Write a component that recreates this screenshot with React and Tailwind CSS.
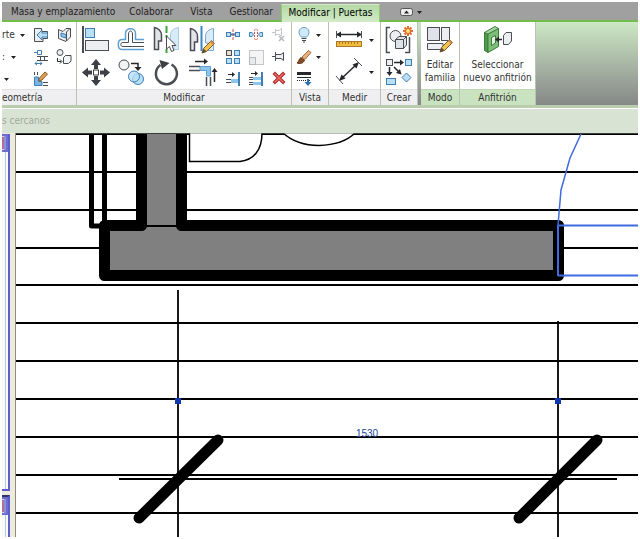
import React from "react";

const INK = "#4a4d52";
const BLUE = "#3f7fb5";
const SKY = "#b9dff5";

function Icon({ size, children }) {
  return (
    <svg width={size} height={size} viewBox={`0 0 ${size} ${size}`} fill="none" aria-hidden="true" className="shrink-0">
      {children}
    </svg>
  );
}

function Pencil({ transform }) {
  return (
    <g transform={transform}>
      <path d="M0 13 L1.5 8.5 L9.5 0.5 L12.5 3.5 L4.5 11.5 Z" fill="#f2c14e" stroke="#7a5a28" />
      <path d="M0 13 L1.5 8.5 L4.5 11.5 Z" fill="#5b4a38" />
      <path d="M9.5 0.5 L12.5 3.5 L11 5 L8 2 Z" fill="#c9885a" />
    </g>
  );
}

const icons = {
  align: (
    <Icon size={30}>
      <path d="M3 1 V28" stroke={INK} strokeWidth="2" />
      <rect x="5.5" y="3.5" width="9" height="9" fill={SKY} stroke={BLUE} />
      <rect x="5.5" y="15.5" width="23" height="10" fill="#eceef1" stroke={INK} />
    </Icon>
  ),
  offset: (
    <Icon size={30}>
      <path d="M28 24.5 H6 C1 24.5 1 14.5 6 14.5 H9.5 V8.5 C9.5 2 19.5 2 19.5 8.5 V14.5 H28" stroke="#5f9fd2" strokeWidth="1.5" />
      <path d="M28 21.5 H7 C4 21.5 4 17.5 7 17.5 H12.5 V9 C12.5 5 16.5 5 16.5 9 V17.5 H28" stroke={INK} />
    </Icon>
  ),
  mirrorPick: (
    <Icon size={30}>
      <path d="M2.5 2.5 C6 3 9.5 6 9.5 10 V16 H6.5 V24.5 H2.5 Z" fill="#e2e4e8" stroke={INK} strokeWidth="1.5" />
      <path d="M26.5 2.5 C22 3 18.5 6 18.5 10 V17 H22 V24.5 H26.5 Z" fill="#d8ecf8" stroke="#a8cbe2" />
      <path d="M14.5 1 V8 M14.5 10 V13 M14.5 24 V28" stroke="#3da639" strokeWidth="2" />
      <path d="M14.5 11 V24 L17.5 21.5 L19.5 26.5 L22 25.5 L20 20.5 H24 Z" fill="#fff" stroke={INK} />
    </Icon>
  ),
  mirrorDraw: (
    <Icon size={30}>
      <path d="M2.5 3.5 C6 4 9.5 7 9.5 11 V17 H6.5 V25.5 H2.5 Z" fill="#e2e4e8" stroke={INK} strokeWidth="1.5" />
      <path d="M25.5 3.5 C21 4 17.5 7 17.5 11 V18 H20 V25.5 H25.5 Z" fill="#d8ecf8" stroke="#7eacd0" />
      <path d="M13.5 1 V26" stroke="#3f86c4" strokeWidth="2" />
      <Pencil transform="translate(14 15)" />
    </Icon>
  ),
  move: (
    <Icon size={30}>
      <g fill="#3c3f43">
        <path d="M16 1 L21 7 H18 V11 H14 V7 H11 Z" />
        <path d="M16 28 L21 22 H18 V18 H14 V22 H11 Z" />
        <path d="M2 14.5 L8 9.5 V12.5 H12 V16.5 H8 V19.5 Z" />
        <path d="M30 14.5 L24 9.5 V12.5 H20 V16.5 H24 V19.5 Z" />
      </g>
      <rect x="13.5" y="12" width="5" height="5" fill="#fff" stroke="#3c3f43" />
    </Icon>
  ),
  copy: (
    <Icon size={30}>
      <circle cx="8" cy="7" r="5" fill="#f3f4f6" stroke={INK} />
      <path d="M15 5.5 H22 V10" stroke="#26282b" strokeWidth="1.5" />
      <path d="M18.5 9 H25.5 L22 13 Z" fill="#26282b" />
      <circle cx="22" cy="21" r="5.5" fill={SKY} stroke={BLUE} />
      <circle cx="18" cy="18.5" r="5.5" fill={SKY} fillOpacity="0.8" stroke={BLUE} />
    </Icon>
  ),
  rotate: (
    <Icon size={30}>
      <path d="M19.5 6.5 A10.5 10.5 0 1 1 8.5 7" stroke={INK} strokeWidth="2.5" />
      <path d="M7.5 2 L17.5 5 L10 11 Z" fill="#3c3f43" />
    </Icon>
  ),
  trim: (
    <Icon size={30}>
      <path d="M7 3.5 H18" stroke="#26282b" strokeWidth="1.5" />
      <path d="M16 0.5 L20 3.5 L16 6.5 Z" fill="#26282b" />
      <path d="M1 8.5 H12 M1 12.5 H12" stroke={INK} strokeWidth="1.5" />
      <path d="M12 8.5 H22.5 V18 H18.5 V12.5 H12 Z" fill="#8cc6ec" stroke="#5f9fd2" />
      <path d="M18.5 19 V28 M22.5 19 V28" stroke={INK} strokeWidth="1.5" />
      <path d="M26.5 24 V13" stroke="#26282b" strokeWidth="1.5" />
      <path d="M23.5 14 L26.5 10 L29.5 14 Z" fill="#26282b" />
    </Icon>
  ),
  split: (
    <Icon size={18}>
      <rect x="2.5" y="6.5" width="4" height="4" fill={SKY} stroke={BLUE} />
      <rect x="11.5" y="6.5" width="4" height="4" fill={SKY} stroke={BLUE} />
      <path d="M6 8.5 H12" stroke={BLUE} strokeWidth="2" />
      <path d="M9 3 V15" stroke="#d4504b" strokeDasharray="3 1" />
    </Icon>
  ),
  splitGap: (
    <Icon size={18}>
      <path d="M2.5 6.5 H4 C7 6.5 7 10.5 4 10.5 H2.5 Z" fill={SKY} stroke={BLUE} />
      <path d="M15.5 6.5 H14 C11 6.5 11 10.5 14 10.5 H15.5 Z" fill={SKY} stroke={BLUE} />
      <path d="M7 4.5 L9 3 L11 4.5 M7.5 6 V11 M10.5 6 V11 M7 12.5 L9 14 L11 12.5" stroke="#d4504b" strokeDasharray="2 1" />
    </Icon>
  ),
  unpin: (
    <Icon size={18}>
      <path d="M5.5 3 V10 M5.5 4.5 H9 L11.5 2.5 V10 L9 8.5 H5.5 M2 6.5 H5" stroke="#c3c6ca" />
      <path d="M9 10 L14 15 M14 10 L9 15" stroke="#b6b9bd" strokeWidth="1.5" />
    </Icon>
  ),
  array: (
    <Icon size={18}>
      <rect x="2.5" y="2.5" width="5" height="5" fill="#e9dfd0" stroke={INK} />
      <rect x="10.5" y="2.5" width="5" height="5" fill={SKY} stroke={BLUE} />
      <rect x="2.5" y="10.5" width="5" height="5" fill={SKY} stroke={BLUE} />
      <rect x="10.5" y="10.5" width="5" height="5" fill={SKY} stroke={BLUE} />
    </Icon>
  ),
  scale: (
    <Icon size={18}>
      <rect x="2.5" y="2.5" width="14" height="14" fill="#f4f4f5" stroke="#c3c6ca" />
      <rect x="2.5" y="9.5" width="6" height="7" fill="#e8e9eb" stroke="#b6b9bd" />
    </Icon>
  ),
  pin: (
    <Icon size={18}>
      <path d="M2 8.5 H6 M5.5 4 V13" stroke={INK} />
      <path d="M5.5 6.5 H11 L13.5 4.5 V12.5 L11 10.5 H5.5 Z" fill="#eceef1" stroke={INK} />
    </Icon>
  ),
  extend: (
    <Icon size={18}>
      <path d="M4 4.5 H9" stroke="#26282b" />
      <path d="M8 2 L11 4.5 L8 7 Z" fill="#26282b" />
      <path d="M2 9.5 H7 M2 12.5 H7" stroke={INK} />
      <rect x="7" y="9" width="7" height="4" fill="#8cc6ec" />
      <path d="M15 2 V16" stroke={BLUE} strokeWidth="2" />
    </Icon>
  ),
  extendMany: (
    <Icon size={18}>
      <path d="M4 3.5 H9" stroke="#26282b" />
      <path d="M8 1 L11 3.5 L8 6 Z" fill="#26282b" />
      <path d="M2 7.5 H6 M2 9.5 H6 M2 12.5 H6 M2 14.5 H6" stroke={INK} />
      <rect x="6" y="7" width="8" height="3" fill="#8cc6ec" />
      <rect x="6" y="12" width="8" height="3" fill="#8cc6ec" />
      <path d="M15 2 V16" stroke={BLUE} strokeWidth="2" />
    </Icon>
  ),
  erase: (
    <Icon size={18}>
      <path d="M5 4 L13 12 M13 4 L5 12" stroke="#a92b2b" strokeWidth="3.5" strokeLinecap="square" />
      <path d="M5 4 L13 12 M13 4 L5 12" stroke="#f06a62" strokeWidth="1.5" strokeLinecap="square" />
    </Icon>
  ),
  cope: (
    <Icon size={18}>
      <path d="M2.5 2.5 H9.5 V5.5 H15.5 V12.5 H11 V15.5 H2.5 Z" fill="#eceef1" stroke={INK} />
      <path d="M15.5 7 H10 V4 L5 9 L10 14 V11 H15.5 Z" fill={SKY} stroke={BLUE} />
    </Icon>
  ),
  cut: (
    <Icon size={18}>
      <path d="M3.5 3.5 L8 5.5 L11 2.5 H15.5 V11 L11 15.5 L3.5 12.5 Z" fill="#eceef1" stroke={INK} />
      <path d="M6 7 L11 8.5 V12 L6 10.5 Z" fill="#8cc6ec" stroke={BLUE} />
      <path d="M11.5 15 V6 L15 2.5" stroke={INK} />
    </Icon>
  ),
  beam: (
    <Icon size={18}>
      <path d="M2 4.5 H5 M5.5 2.5 V6.5 H9.5 V2.5 Z" stroke={BLUE} />
      <path d="M5 8.5 H16 M5 12.5 H16" stroke={INK} />
      <path d="M8.5 9 V12 M12.5 9 V12" stroke={INK} />
      <path d="M3 15.5 H10 M5 13.5 L3 15.5 L5 17 M8 13.5 L10 15.5 L8 17" stroke={BLUE} />
    </Icon>
  ),
  joins: (
    <Icon size={18}>
      <circle cx="5" cy="4.5" r="3" fill="#eceef1" stroke={INK} />
      <path d="M2.5 10 V13.5 H6 M5 11.5 L7 13.5 L5 15.5" stroke="#26282b" />
      <path d="M8.5 9.5 L10.5 7.5 H16 V13 L13.5 15.5 H8.5 Z" fill="#f3f4f6" stroke={INK} />
    </Icon>
  ),
  demolish: (
    <Icon size={18}>
      <path d="M2.5 2 V5 M5.5 2 V5" stroke={INK} />
      <path d="M2.5 7 H6.5 V11.5 H10 V15.5 H2.5 Z" fill="#79b4e2" stroke={BLUE} />
      <path d="M11 12.5 H16 M11 15.5 H16" stroke={INK} />
      <path d="M6.5 11 L7.5 8 L13 2 L15.5 4 L10 10 Z" fill="#e2a04e" stroke="#8b5a2b" />
    </Icon>
  ),
  bulb: (
    <Icon size={18}>
      <path d="M6.5 11 C2 7.5 4 1.5 9 1.5 C14 1.5 16 7.5 11.5 11 Z" fill="#cfe9fb" stroke="#6d9cc4" />
      <path d="M6.5 12.5 H11.5 M7 14.5 H11 M8 16 H10" stroke={INK} />
    </Icon>
  ),
  brush: (
    <Icon size={18}>
      <path d="M2 15 C4 14 3.5 11 6 9.5 L9.5 12.5 C8 15.5 5 16 2 15 Z" fill="#8a4b22" stroke="#5d3115" />
      <path d="M7 9 L13.5 2.5 L16 4.5 L10 11.5 Z" fill="#e2b283" stroke="#a46b3a" />
    </Icon>
  ),
  lineStyle: (
    <Icon size={18}>
      <path d="M2 3.5 H16" stroke="#26282b" strokeWidth="3" />
      <path d="M2 7.5 H16" stroke="#26282b" />
      <path d="M2 10.5 H16" stroke="#26282b" strokeDasharray="1 1" />
      <path d="M13 9 V13" stroke="#2c6fb0" strokeWidth="2" />
      <path d="M9.5 12 H16.5 L13 16 Z" fill="#2c6fb0" />
    </Icon>
  ),
  measure: (
    <Icon size={30}>
      <path d="M3 9.5 H27" stroke="#26282b" strokeWidth="1.5" />
      <path d="M2 9.5 L7 6.5 V12.5 Z M28 9.5 L23 6.5 V12.5 Z" fill="#26282b" />
      <path d="M2.5 6 V13 M27.5 6 V13" stroke={INK} />
      <rect x="2.5" y="16.5" width="25" height="5" fill="#f2bd3a" stroke="#a8792a" />
      <path d="M5.5 17 V19 M8.5 17 V19 M11.5 17 V19 M14.5 17 V19 M17.5 17 V19 M20.5 17 V19 M23.5 17 V19" stroke="#a8792a" />
    </Icon>
  ),
  dimension: (
    <Icon size={30}>
      <path d="M7 22 L23 7" stroke="#26282b" strokeWidth="1.5" />
      <path d="M5 24 L7.5 17.5 L11.5 21.5 Z M25 5 L18.5 7.5 L22.5 11.5 Z" fill="#26282b" />
      <path d="M2 19 L9 27 M20 1 L28 9" stroke={INK} />
    </Icon>
  ),
  createGroup: (
    <Icon size={30}>
      <path d="M6 2.5 H2.5 V27.5 H6 M21 27.5 H25.5 V12" stroke={INK} strokeWidth="1.5" />
      <circle cx="11.5" cy="11" r="5.5" fill="#eceef1" stroke={INK} />
      <path d="M11.5 14.5 L15 11.5 H22.5 V20 L19.5 23.5 H11.5 Z" fill="#dfe3e8" stroke={INK} />
      <path d="M11.5 14.5 H19.5 V23.5 M19.5 14.5 L22.5 11.5" stroke={INK} />
      <path d="M24 1 V11 M19 6 H29 M20.5 2.5 L27.5 9.5 M27.5 2.5 L20.5 9.5" stroke="#e5692c" strokeWidth="2" />
      <circle cx="24" cy="6" r="2.5" fill="#ffe27a" stroke="#e5692c" />
    </Icon>
  ),
  createSimilar: (
    <Icon size={30}>
      <rect x="2.5" y="2.5" width="6" height="6" fill="#eceef1" stroke={INK} />
      <path d="M10 5.5 H18 M5.5 10 V17 M10 10 L15 15" stroke="#26282b" strokeWidth="1.5" />
      <path d="M16 2.5 L20 5.5 L16 8.5 Z M2.5 15 H8.5 L5.5 19 Z M17.5 17.5 L12 16 L16 12 Z" fill="#26282b" />
      <rect x="21.5" y="2.5" width="6" height="6" fill={SKY} stroke={BLUE} />
      <rect x="2.5" y="21.5" width="9" height="6" fill={SKY} stroke={BLUE} />
      <path d="M22.5 16 L27 20.5 L22.5 25 L18 20.5 Z" fill={SKY} stroke={BLUE} />
    </Icon>
  ),
  editFamily: (
    <Icon size={30}>
      <rect x="2.5" y="3.5" width="12" height="13" fill="#dfe2e8" stroke={INK} />
      <rect x="16.5" y="3.5" width="8" height="13" fill="#eceef1" stroke={INK} />
      <path d="M2.5 19.5 H18 V25.5 H2.5 Z" fill="#eceef1" stroke={INK} />
      <Pencil transform="translate(15 15)" />
    </Icon>
  ),
  pickHost: (
    <Icon size={30}>
      <path d="M1.5 8.5 L5 10 V28.5 L1.5 26.5 Z" fill="#4d9a4b" stroke="#3c7d3b" />
      <path d="M5 10 L15.5 4.5 V22.5 L5 28.5 Z" fill="#7cc077" stroke="#3c7d3b" />
      <path d="M1.5 8.5 L12 2.5 L15.5 4.5 L5 10 Z" fill="#a5d8a0" stroke="#3c7d3b" />
      <path d="M8.5 13.5 L12.5 11.5 V19 L8.5 21.5 Z" fill="#e3f2df" stroke="#3c7d3b" />
      <path d="M14 15.5 H19" stroke="#26282b" strokeWidth="1.5" />
      <path d="M12 15.5 L16 12.5 V18.5 Z" fill="#26282b" />
      <path d="M20.5 11.5 L23 8.5 H28.5 V17 L25.5 20.5 H20.5 Z" fill="#eceef1" stroke={INK} />
    </Icon>
  ),
};

function Tool({ label, icon, className }) {
  return (
    <button type="button" aria-label={label} className={`flex items-center justify-center ${className}`}>
      {icons[icon]}
    </button>
  );
}

function Caret({ label }) {
  return (
    <button type="button" aria-label={label} className="flex w-2 items-center justify-center">
      <svg width="5" height="3" viewBox="0 0 5 3" aria-hidden="true">
        <path d="M0 0 H5 L2.5 3 Z" fill="#222" />
      </svg>
    </button>
  );
}

function Panel({ title, green, start, className, children }) {
  return (
    <section aria-label={title} className={`flex shrink-0 flex-col border-r border-[#b9c2b4] bg-white ${className}`}>
      <div className="h-[67px] pt-0.5">{children}</div>
      <h2
        className={`flex h-4 items-center border-t ${start ? "justify-start" : "justify-center"} ${green ? "border-[#bcd6b2] bg-[#c9e2bf]" : "border-[#e2e2e4] bg-[#efeff1]"}`}
      >
        {title}
      </h2>
    </section>
  );
}

const bigTools = [
  ["Alinear", "align"],
  ["Desfase", "offset"],
  ["Reflejar: seleccionar eje", "mirrorPick"],
  ["Reflejar: dibujar eje", "mirrorDraw"],
  ["Desplazar", "move"],
  ["Copiar", "copy"],
  ["Rotar", "rotate"],
  ["Recortar", "trim"],
];

const smallTools = [
  ["Dividir elemento", "split"],
  ["Dividir con separación", "splitGap"],
  ["Desbloquear", "unpin"],
  ["Matriz", "array"],
  ["Escala", "scale"],
  ["Bloquear", "pin"],
  ["Alargar elemento", "extend"],
  ["Alargar varios", "extendMany"],
  ["Suprimir", "erase"],
];

const tabs = [
  ["Masa y emplazamiento", "ml-[9px]"],
  ["Colaborar", "ml-[14px]"],
  ["Vista", "ml-[17px]"],
  ["Gestionar", "ml-[17px]"],
];

function TabBar() {
  return (
    <nav className="flex h-[18px] items-end bg-[#a0a0a0] text-[#222]">
      {tabs.map(([name, gap]) => (
        <a key={name} href="#" className={`flex h-4 shrink-0 items-center ${gap}`}>
          {name}
        </a>
      ))}
      <a
        href="#"
        aria-current="page"
        className="z-10 -mb-0.5 ml-2 flex h-[18px] w-[99px] shrink-0 items-center justify-center border-x border-t border-x-[#8ccf68] border-t-[#d3ebc6] bg-linear-to-b from-[#b4d8a5] to-[#d2ebc8] pb-0.5 text-black"
      >
        Modificar | Puertas
      </a>
      <button type="button" aria-label="Minimizar cinta" className="ml-5 flex h-4 items-center gap-1">
        <svg width="13" height="8" viewBox="0 0 13 8" aria-hidden="true">
          <rect x="0.5" y="0.5" width="12" height="7" rx="2" fill="#ececec" stroke="#555" />
          <path d="M4 5.5 L6.5 2.5 L9 5.5 Z" fill="#222" />
        </svg>
        <svg width="5" height="3" viewBox="0 0 5 3" aria-hidden="true">
          <path d="M0 0 H5 L2.5 3 Z" fill="#222" />
        </svg>
      </button>
    </nav>
  );
}

function Ribbon() {
  return (
    <div className="flex overflow-hidden border-t-2 border-[#74bd4c] bg-linear-to-b from-[#cde8c4] to-[#868887] text-[#333]">
      <Panel title="eometría" start className="w-[75px]">
        <div className="flex">
          <div className="flex w-[27px] shrink-0 flex-col">
            <div className="flex h-[22px] items-center gap-1"><span>rte</span><Caret label="Opciones de cortar" /></div>
            <div className="flex h-[22px] items-center gap-1"><span>:</span><Caret label="Opciones de unir" /></div>
            <div className="flex h-[22px] items-center"><Caret label="Opciones de división" /></div>
          </div>
          <div className="grid grid-cols-[23px_23px]">
            <Tool label="Recorte" icon="cope" className="h-[22px]" />
            <Tool label="Cortar geometría" icon="cut" className="h-[22px]" />
            <Tool label="Uniones de viga" icon="beam" className="h-[22px]" />
            <Tool label="Uniones de muro" icon="joins" className="h-[22px]" />
            <Tool label="Derribar" icon="demolish" className="h-[22px]" />
          </div>
        </div>
      </Panel>
      <Panel title="Modificar" className="w-[215px]">
        <div className="flex">
          <div className="grid grid-cols-[36px_36px_36px_36px]">
            {bigTools.map(([label, icon]) => <Tool key={icon} label={label} icon={icon} className="h-8" />)}
          </div>
          <div className="grid grid-cols-[23px_23px_23px]">
            {smallTools.map(([label, icon]) => <Tool key={icon} label={label} icon={icon} className="h-[22px]" />)}
          </div>
        </div>
      </Panel>
      <Panel title="Vista" className="w-[37px]">
        {["bulb", "brush", "lineStyle"].map((icon, i) => (
          <div key={icon} className="flex h-[22px] pl-0.5">
            <Tool label={["Ocultar", "Modificar gráficos", "Grosor de línea"][i]} icon={icon} className="w-5" />
            {i < 2 && <Caret label="Más opciones de vista" />}
          </div>
        ))}
      </Panel>
      <Panel title="Medir" className="w-[52px]">
        {["measure", "dimension"].map((icon, i) => (
          <div key={icon} className="flex h-8 gap-0.5 pl-1">
            <Tool label={["Medir distancia", "Cota"][i]} icon={icon} className="w-8" />
            <Caret label="Más opciones de medida" />
          </div>
        ))}
      </Panel>
      <Panel title="Crear" className="w-[37px]">
        <Tool label="Crear grupo" icon="createGroup" className="h-8 w-full" />
        <Tool label="Crear similar" icon="createSimilar" className="h-8 w-full" />
      </Panel>
      <Panel title="Modo" green className="ml-[3px] w-[39px]">
        <button type="button" className="flex w-full flex-col items-center leading-[13px]">
          {icons.editFamily}
          <span className="pt-1">Editar<br />familia</span>
        </button>
      </Panel>
      <Panel title="Anfitrión" green className="w-[76px]">
        <button type="button" className="flex w-full flex-col items-center leading-[13px]">
          {icons.pickHost}
          <span className="pt-1">Seleccionar<br />nuevo anfitrión</span>
        </button>
      </Panel>
    </div>
  );
}

function DockedHeader() {
  return (
    <div className="h-[18px] border-y-2 border-r-2 border-[#6a6fd0] bg-[#8f8fdc]">
      <div className="h-full w-0.5 border-y border-[#d5d3f0] bg-[#b0708f]" />
    </div>
  );
}

function DockedPanels() {
  return (
    <aside className="flex w-3.5 shrink-0 flex-col gap-1 border-r border-[#8f8c7c] bg-[#ecebdd] pt-px">
      <div className="flex h-[357px] w-2 flex-col border-r-2 border-b-2 border-[#5b5fcb] bg-[#fbfbf6]">
        <DockedHeader />
        <div className="mr-0.5 flex-1 border-r border-[#b4c8ee]" />
      </div>
      <div className="flex w-2 flex-1 flex-col border-t-2 border-r-2 border-t-[#2f3568] border-r-[#5b5fcb] bg-[#fbfbf6]">
        <DockedHeader />
        <div className="mr-0.5 flex-1 border-r border-[#b4c8ee]" />
      </div>
    </aside>
  );
}

const boards = [1, 39, 77, 115, 152, 190, 228, 266, 304, 342, 380];

function Drawing() {
  return (
    <div className="relative min-h-[404px] min-w-0 flex-1 bg-white">
      <svg className="absolute inset-0 h-full w-full" fill="none" role="img" aria-label="Muro con puerta y cota 1530">
        <g stroke="#000" strokeWidth="1.8">
          {boards.map((y) => <line key={y} x1="0" x2="100%" y1={y} y2={y} />)}
          <path d="M173.5 0 V28.5 H224 C238 27 246 17 246 0" fill="#fff" strokeWidth="1.5" />
          <path d="M267 0 C278 10 292 12.5 303 12.5 C318 12 330 9 339 0" fill="#fff" strokeWidth="1.5" />
        </g>
        <line x1="0" x2="100%" y1="0" y2="0" stroke="#777" />
        <g stroke="#000">
          <path d="M75.5 1 V93 H88.5 V1" strokeWidth="5" strokeLinejoin="round" />
          <path d="M125 1 H165.5 V93 H542 V142 H88.5 V93 H125 Z" fill="#808080" stroke="none" />
          <path d="M125.5 1 V92.5 H88.5 V142.5 H542.5 V92.5 H165.5 V1" strokeWidth="11" strokeLinejoin="round" />
          <path d="M125 93 H166" strokeWidth="2" />
        </g>
        <g stroke="#3f6be0" strokeWidth="2">
          <path d="M565 1 L554 25 L545 57 L542 92" strokeWidth="1.5" />
          <line x1="542" x2="100%" y1="92.5" y2="92.5" />
          <line x1="542" x2="100%" y1="142.5" y2="142.5" />
          <path d="M542 92 V143" />
        </g>
        <g stroke="#000" strokeWidth="1.8">
          <line x1="162" x2="162" y1="157" y2="100%" />
          <line x1="542" x2="542" y1="188" y2="100%" />
          <line x1="103" x2="601" y1="346" y2="346" />
        </g>
        <path d="M202 307 L123 385 M581 307 L503 385" stroke="#000" strokeWidth="11" strokeLinecap="round" />
        <path d="M159 265 H165 V271 H159 Z M539 265 H545 V271 H539 Z" fill="#1238b0" />
        <text x="351" y="304" textAnchor="middle" fill="#23479a" className="font-['Liberation_Sans',Arial,sans-serif] text-[10px]">1530</text>
      </svg>
    </div>
  );
}

export default function App() {
  return (
    <div className="flex min-h-screen flex-col bg-white p-0.5 font-['DejaVu_Sans_Condensed','DejaVu_Sans',sans-serif] text-[10px] leading-3">
      <TabBar />
      <Ribbon />
      <div className="h-1 border-b border-white bg-[#b9cdad]" />
      <div className="flex h-6 items-center bg-[#d9e3d3] text-[#a0aa9c]">s cercanos</div>
      <main className="flex flex-1">
        <DockedPanels />
        <Drawing />
      </main>
    </div>
  );
}
